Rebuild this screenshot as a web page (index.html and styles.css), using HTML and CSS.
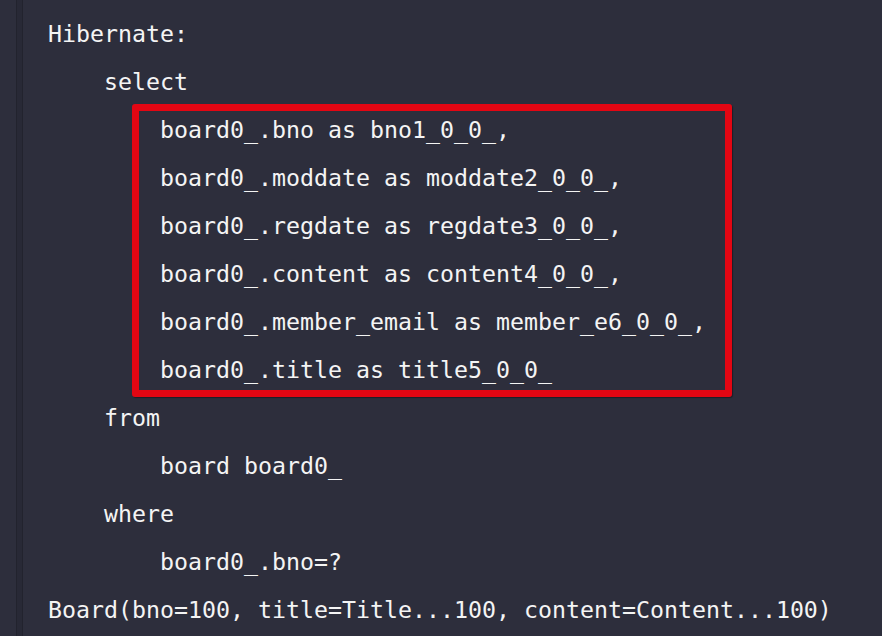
FILE: index.html
```html
<!DOCTYPE html>
<html>
<head>
<meta charset="utf-8">
<link rel="stylesheet" href="styles.css">
</head>
<body>
<div class="page">
  <div class="gutter"></div>
  <div class="code">
    <div class="line">Hibernate:</div>
    <div class="line i1">select</div>
    <div class="hl">
      <div class="line i2">board0_.bno as bno1_0_0_,</div>
      <div class="line i2">board0_.moddate as moddate2_0_0_,</div>
      <div class="line i2">board0_.regdate as regdate3_0_0_,</div>
      <div class="line i2">board0_.content as content4_0_0_,</div>
      <div class="line i2">board0_.member_email as member_e6_0_0_,</div>
      <div class="line i2">board0_.title as title5_0_0_</div>
    </div>
    <div class="line i1">from</div>
    <div class="line i2">board board0_</div>
    <div class="line i1">where</div>
    <div class="line i2">board0_.bno=?</div>
    <div class="line">Board(bno=100, title=Title...100, content=Content...100)</div>
  </div>
</div>
</body>
</html>
```
FILE: styles.css
```css
html, body {
  margin: 0;
  padding: 0;
  background: #2d2e3c;
  height: 100%;
  overflow: hidden;
}
.page {
  display: flex;
  height: 100%;
  padding-left: 16px;
}
.gutter {
  width: 5px;
  flex: none;
  background: #282936;
  border-left: 1px solid #22232e;
  border-right: 1px solid #22232e;
}
.code {
  padding: 10px 0 0 25px;
  font-family: "DejaVu Sans Mono", monospace;
  font-size: 23.25px;
  line-height: 48px;
  color: #f4f4f4;
  flex: 1;
}
.line {
  white-space: pre;
  height: 48px;
}
.i1 { padding-left: 4ch; }
.i2 { padding-left: 8ch; }
.hl {
  position: relative;
}
.hl::before {
  content: "";
  position: absolute;
  left: 84px;
  top: -2px;
  width: 600px;
  height: 293px;
  box-sizing: border-box;
  border: 7px solid #e30613;
  border-radius: 3px;
  box-shadow: 1px 1px 1px rgba(0,0,0,0.35);
  pointer-events: none;
}
```
